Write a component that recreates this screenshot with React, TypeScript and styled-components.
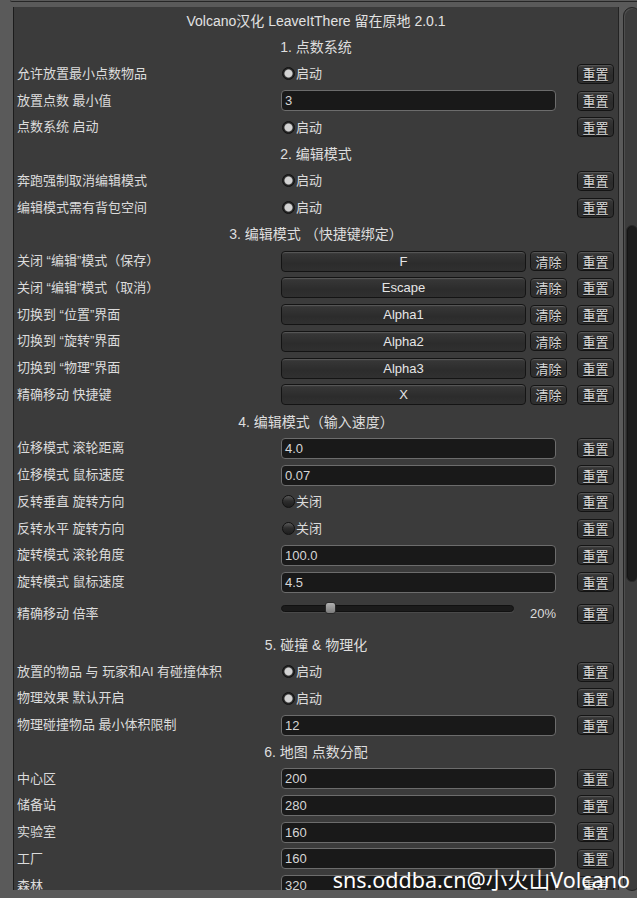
import styled, { createGlobalStyle } from 'styled-components';

const GlobalStyle = createGlobalStyle`
  html, body {
    margin: 0;
    padding: 0;
    background: #5a5a5a;
    overflow: hidden;
  }
  body {
    font-family: 'Liberation Sans', 'Noto Sans CJK SC', sans-serif;
  }
`;

const Page = styled.div`
  position: relative;
  height: 898px;
  overflow: hidden;
`;

const TopEdge = styled.div`
  height: 1px;
  margin-left: 10px;
  border-bottom: 1px solid #262626;
  border-bottom-left-radius: 3px;
`;

const Body = styled.div`
  display: flex;
  margin-top: 5px;
`;

const Gutter = styled.div`
  width: 13px;
  flex-shrink: 0;
`;

const Panel = styled.div`
  width: 604px;
  height: 883px;
  flex-shrink: 0;
  background: #3b3b3b;
  border-left: 1px solid #1c1c1c;
  border-right: 1px solid #232323;
  display: flex;
  flex-direction: column;
  overflow: hidden;
  color: #dcdcdc;
`;

const ScrollTrack = styled.div`
  margin-left: 4px;
  width: 18px;
  height: 884px;
  flex-shrink: 0;
  background: #3c3c3c;
  border: 1px solid #232323;
  border-radius: 9px;
  box-shadow: inset 1px 1px 0 #4e4e4e;
  padding-top: 217px;
  box-sizing: border-box;
`;

const ScrollThumb = styled.div`
  margin-left: 2px;
  width: 10px;
  height: 355px;
  background: #1c1c1c;
  border: 1px solid #2a2a2a;
  border-radius: 6px;
  box-shadow: inset 1px 0 0 #141414;
`;

const Title = styled.div`
  height: 26.75px;
  flex-shrink: 0;
  display: flex;
  align-items: center;
  justify-content: center;
  font-size: 14px;
  color: #e2e2e2;
`;

const Section = styled.div`
  height: 26.75px;
  flex-shrink: 0;
  display: flex;
  align-items: center;
  justify-content: center;
  padding-bottom: 2px;
  box-sizing: border-box;
  font-size: 14px;
  color: #dedede;
`;

const Row = styled.div<{ $tall?: boolean }>`
  height: ${(p) => (p.$tall ? '36px' : '26.75px')};
  flex-shrink: 0;
  display: flex;
  align-items: center;
`;

const Label = styled.div`
  width: 267px;
  padding-left: 3px;
  padding-bottom: 3px;
  box-sizing: border-box;
  font-size: 13px;
  white-space: nowrap;
`;

const Control = styled.div`
  width: 296px;
  display: flex;
  align-items: center;
`;

const Field = styled.div`
  width: 275px;
  height: 21px;
  box-sizing: border-box;
  background: #191919;
  border: 1px solid #6c6c6c;
  border-radius: 4px;
  padding-left: 3px;
  display: flex;
  align-items: center;
  font-size: 13px;
  color: #d6d6d6;
`;

const Toggle = styled.div`
  display: flex;
  align-items: center;
  font-size: 13px;
  margin-left: 1px;
  padding-bottom: 2px;
`;

const Radio = styled.span<{ $on: boolean }>`
  width: 13px;
  height: 13px;
  box-sizing: border-box;
  border-radius: 50%;
  border: 1px solid #111;
  background: ${(p) =>
    p.$on
      ? 'radial-gradient(circle, #d2d2d2 0 3.4px, #9a9a9a 3.9px, #262626 4.6px)'
      : 'linear-gradient(#5a5a5a, #2e2e2e 45%, #1e1e1e)'};
  margin-top: 2px;
  margin-right: 1px;
`;

const buttonLook = `
  box-sizing: border-box;
  height: 21px;
  border: 1px solid #141414;
  border-radius: 4px;
  background: linear-gradient(#4a4a4a 0, #363636 2px, #2c2c2c 60%, #303030 100%);
  box-shadow: inset 0 1px 0 #555;
  display: flex;
  align-items: center;
  justify-content: center;
  font-size: 13px;
  color: #e6e6e6;
`;

const KeyButton = styled.div`
  ${buttonLook}
  width: 245px;
`;

const SmallButton = styled.div<{ $gap?: number }>`
  ${buttonLook}
  width: 37px;
  height: 20px;
  margin-left: ${(p) => p.$gap ?? 0}px;
  color: #d8d8d8;
  text-shadow: 0 1px 0 #111;
`;

const SliderTrack = styled.div`
  position: relative;
  width: 233px;
  height: 7px;
  margin-top: -10px;
  box-sizing: border-box;
  background: #1b1b1b;
  border: 1px solid #111;
  border-radius: 4px;
  box-shadow: 0 1px 0 #4a4a4a;
`;

const SliderThumb = styled.div`
  position: absolute;
  top: -4px;
  width: 11px;
  height: 12px;
  box-sizing: border-box;
  background: linear-gradient(#b0b0b0, #7c7c7c);
  border: 1px solid #2a2a2a;
  border-radius: 3px;
`;

const Percent = styled.div`
  width: 42px;
  text-align: right;
  font-size: 13px;
`;

const Watermark = styled.div`
  position: absolute;
  right: 7px;
  bottom: 4px;
  font-family: 'Noto Sans', 'Noto Sans CJK SC', sans-serif;
  font-size: 21.5px;
  color: #ffffff;
  white-space: nowrap;
`;

type Item =
  | { kind: 'section'; text: string }
  | { kind: 'toggle'; label: string; on: boolean }
  | { kind: 'field'; label: string; value: string }
  | { kind: 'key'; label: string; value: string }
  | { kind: 'slider'; label: string; value: number };

const items: Item[] = [
  { kind: 'section', text: '1. 点数系统' },
  { kind: 'toggle', label: '允许放置最小点数物品', on: true },
  { kind: 'field', label: '放置点数 最小值', value: '3' },
  { kind: 'toggle', label: '点数系统 启动', on: true },
  { kind: 'section', text: '2. 编辑模式' },
  { kind: 'toggle', label: '奔跑强制取消编辑模式', on: true },
  { kind: 'toggle', label: '编辑模式需有背包空间', on: true },
  { kind: 'section', text: '3. 编辑模式 （快捷键绑定）' },
  { kind: 'key', label: '关闭 “编辑”模式（保存）', value: 'F' },
  { kind: 'key', label: '关闭 “编辑”模式（取消）', value: 'Escape' },
  { kind: 'key', label: '切换到 “位置”界面', value: 'Alpha1' },
  { kind: 'key', label: '切换到 “旋转”界面', value: 'Alpha2' },
  { kind: 'key', label: '切换到 “物理”界面', value: 'Alpha3' },
  { kind: 'key', label: '精确移动 快捷键', value: 'X' },
  { kind: 'section', text: '4. 编辑模式（输入速度）' },
  { kind: 'field', label: '位移模式 滚轮距离', value: '4.0' },
  { kind: 'field', label: '位移模式 鼠标速度', value: '0.07' },
  { kind: 'toggle', label: '反转垂直 旋转方向', on: false },
  { kind: 'toggle', label: '反转水平 旋转方向', on: false },
  { kind: 'field', label: '旋转模式 滚轮角度', value: '100.0' },
  { kind: 'field', label: '旋转模式 鼠标速度', value: '4.5' },
  { kind: 'slider', label: '精确移动 倍率', value: 20 },
  { kind: 'section', text: '5. 碰撞 & 物理化' },
  { kind: 'toggle', label: '放置的物品 与 玩家和AI 有碰撞体积', on: true },
  { kind: 'toggle', label: '物理效果 默认开启', on: true },
  { kind: 'field', label: '物理碰撞物品 最小体积限制', value: '12' },
  { kind: 'section', text: '6. 地图 点数分配' },
  { kind: 'field', label: '中心区', value: '200' },
  { kind: 'field', label: '储备站', value: '280' },
  { kind: 'field', label: '实验室', value: '160' },
  { kind: 'field', label: '工厂', value: '160' },
  { kind: 'field', label: '森林', value: '320' },
];

function renderControl(item: Item) {
  switch (item.kind) {
    case 'toggle':
      return (
        <Toggle>
          <Radio $on={item.on} />
          {item.on ? '启动' : '关闭'}
        </Toggle>
      );
    case 'field':
      return <Field>{item.value}</Field>;
    case 'key':
      return (
        <>
          <KeyButton>{item.value}</KeyButton>
          <SmallButton $gap={4}>清除</SmallButton>
        </>
      );
    case 'slider':
      return (
        <>
          <SliderTrack>
            <SliderThumb style={{ left: `${(item.value / 100) * 222 - 1}px` }} />
          </SliderTrack>
          <Percent>{item.value}%</Percent>
        </>
      );
    default:
      return null;
  }
}

export default function App() {
  return (
    <Page>
      <GlobalStyle />
      <TopEdge />
      <Body>
        <Gutter />
        <Panel>
          <Title>Volcano汉化 LeaveItThere 留在原地 2.0.1</Title>
          {items.map((item, i) =>
            item.kind === 'section' ? (
              <Section key={i}>{item.text}</Section>
            ) : (
              <Row key={i} $tall={item.kind === 'slider'}>
                <Label>{item.label}</Label>
                <Control>{renderControl(item)}</Control>
                <SmallButton>重置</SmallButton>
              </Row>
            )
          )}
        </Panel>
        <ScrollTrack>
          <ScrollThumb />
        </ScrollTrack>
      </Body>
      <Watermark>sns.oddba.cn@小火山Volcano</Watermark>
    </Page>
  );
}
